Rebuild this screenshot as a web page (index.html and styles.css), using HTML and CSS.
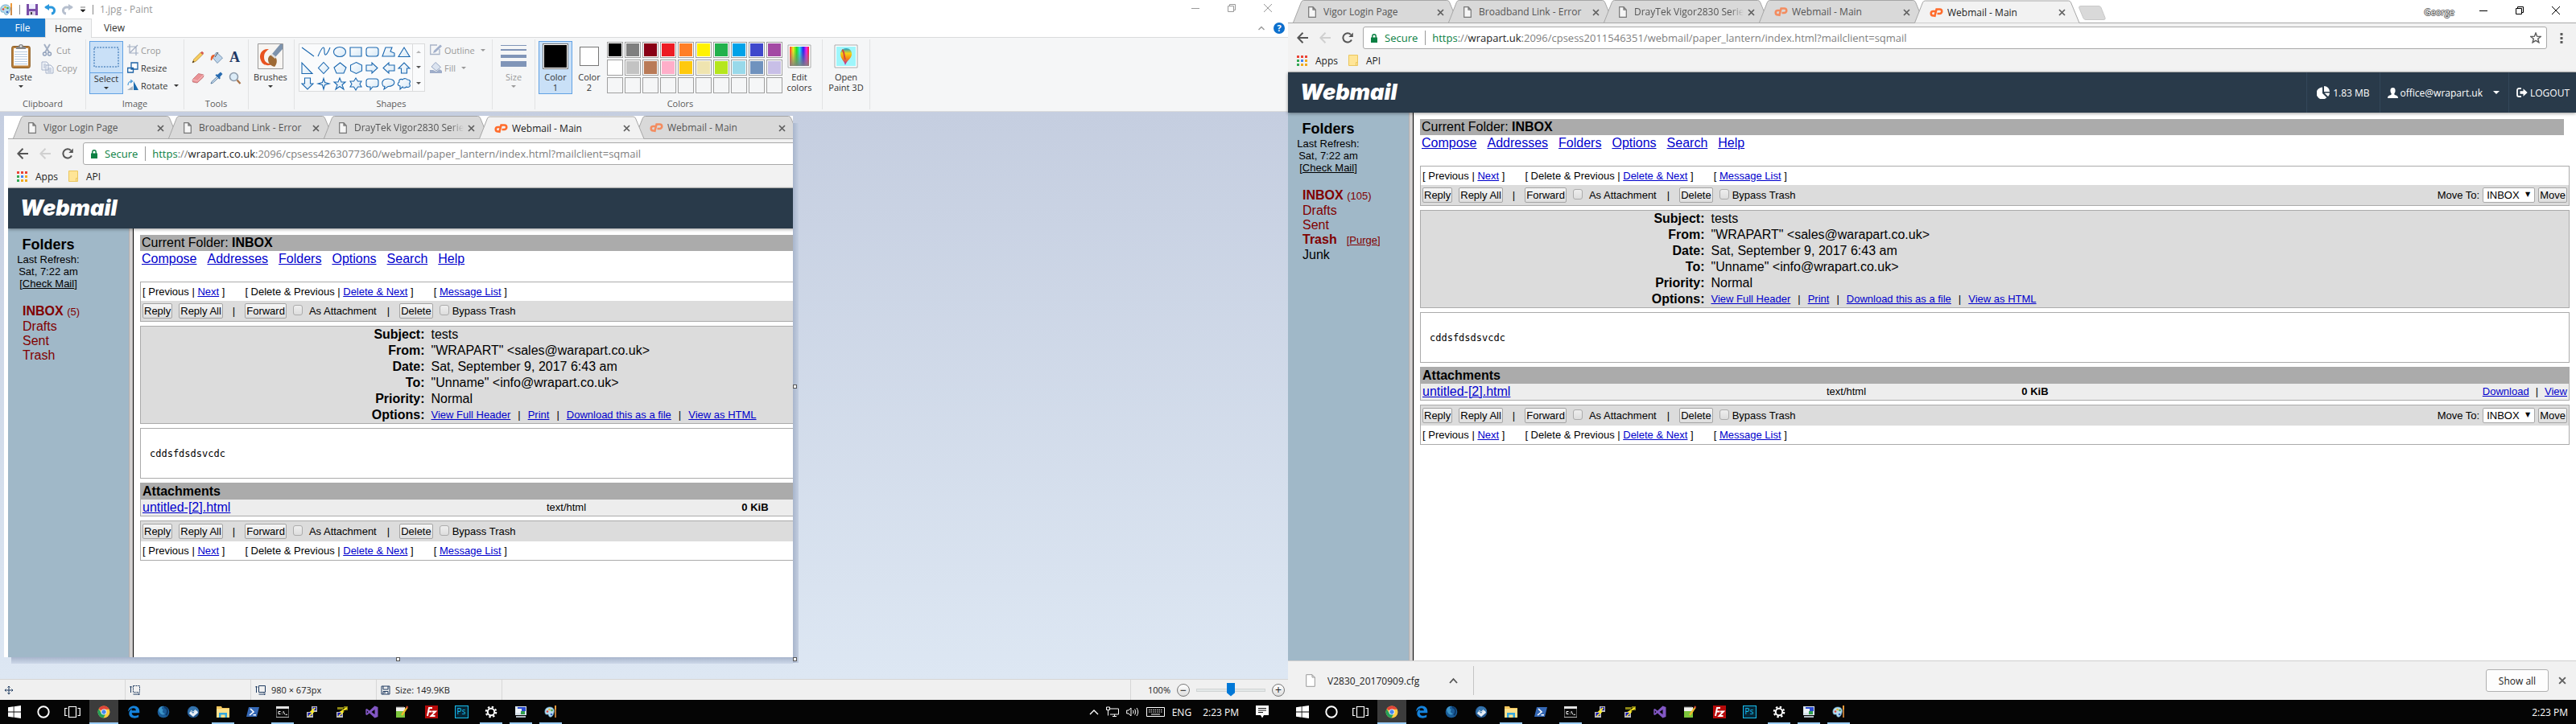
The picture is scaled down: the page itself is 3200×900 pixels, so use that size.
FILE: index.html
```html
<!DOCTYPE html>
<html lang="en">
<head>
<meta charset="utf-8">
<title>Desktop</title>
<link rel="stylesheet" href="styles.css">
</head>
<body>
<svg class="sprite" aria-hidden="true">
  <defs>
    <linearGradient id="g-shape" x1="0" y1="0" x2="1" y2="1"><stop offset="0" stop-color="#fff"/><stop offset="1" stop-color="#d6e8f6"/></linearGradient>
    <linearGradient id="g-rainbow" x1="0" x2="1" y1="0" y2="0"><stop offset="0" stop-color="#f33"/><stop offset=".18" stop-color="#ee2"/><stop offset=".36" stop-color="#2d2"/><stop offset=".52" stop-color="#2de"/><stop offset=".7" stop-color="#22e"/><stop offset=".86" stop-color="#e2e"/><stop offset="1" stop-color="#f22"/></linearGradient>
    <linearGradient id="g-shade" x1="0" x2="0" y1="0" y2="1"><stop offset=".2" stop-color="#808080" stop-opacity="0"/><stop offset="1" stop-color="#808080" stop-opacity=".9"/></linearGradient>
    <linearGradient id="g-balloon" x1="0" x2="0" y1="0" y2="1"><stop offset="0" stop-color="#1b9fd0"/><stop offset=".3" stop-color="#f5d312"/><stop offset=".6" stop-color="#f58a12"/><stop offset="1" stop-color="#b012c0"/></linearGradient>
    <symbol id="tab" viewBox="0 0 206 28"><path d="M.5 28 10.500 2.500Q11.500.5 13.500.5H191.500Q193.500.5 194.500 2.500L205 28" stroke="#a6a6a6"/></symbol>
    <symbol id="page" viewBox="0 0 10 14"><path d="M.7.7H6L9.300 4.200V13.300H.7ZM6 .7V4.200H9.300" fill="#f6f6f6" stroke="#767676" stroke-width="1.200"/></symbol>
    <symbol id="cp" viewBox="0 0 17 12"><path d="M7 4H4.500A2.600 2.600 0 0 0 4.500 9.500H6.500L8.600 1.500H12.500A2.600 2.600 0 0 1 12.500 7H9.500M6.500 9.500 6.200 11" fill="none" stroke="#ff6c2c" stroke-width="2.600"/></symbol>
    <symbol id="x" viewBox="0 0 9 9"><path d="M1 1 8 8M8 1 1 8" stroke="#5f5f5f" stroke-width="1.700"/></symbol>
    <symbol id="back" viewBox="0 0 14 14"><path d="M14 7H1.500M7.500 .8 1.300 7 7.500 13.200" fill="none" stroke="currentColor" stroke-width="2"/></symbol>
    <symbol id="reload" viewBox="0 0 14 14"><path d="M12 9.500A5.600 5.600 0 1 1 11 3" fill="none" stroke="#555" stroke-width="2"/><path d="M13.800.5V6H8.300Z" fill="#555"/></symbol>
    <symbol id="lock" viewBox="0 0 8 11"><path d="M0 4.500H8V11H0Z" fill="#0b8043"/><path d="M1.800 5V3A2.200 2.200 0 0 1 6.200 3V5" fill="none" stroke="#0b8043" stroke-width="1.400"/></symbol>
    <symbol id="star" viewBox="0 0 14 14"><path d="M7 1 8.600 5.200 13.200 5.500 9.700 8.300 10.900 12.800 7 10.300 3.100 12.800 4.300 8.300.8 5.500 5.400 5.200Z" fill="none" stroke="#5a5a5a" stroke-width="1.400"/></symbol>
    <symbol id="dots" viewBox="0 0 4 14"><path d="M.5 1H3.500V4H.5ZM.5 6H3.500V9H.5ZM.5 11H3.500V14H.5Z" fill="#5a5a5a"/></symbol>
    <symbol id="apps" viewBox="0 0 13 13"><path d="M0 0H3V3H0ZM5 0H8V3H5ZM10 0H13V3H10Z" fill="#ea4335"/><path d="M0 5H3V8H0ZM0 10H3V13H0Z" fill="#34a853"/><path d="M5 5H8V8H5Z" fill="#4285f4"/><path d="M10 5H13V8H10ZM5 10H8V13H5ZM10 10H13V13H10Z" fill="#f0a91c"/></symbol>
    <symbol id="folder" viewBox="0 0 12 14"><path d="M.5.5H11.500V13.500H.5Z" fill="#ffe597" stroke="#eac65f"/><path d="M9.500 13.500V9.500H11.500" fill="none" stroke="#eac65f"/></symbol>
    <symbol id="min" viewBox="0 0 10 10"><path d="M0 5.500H10" stroke="currentColor"/></symbol>
    <symbol id="restore" viewBox="0 0 10 10"><path d="M.5 2.500H7.500V9.500H.5ZM2.500 2.500V.5H9.500V7.500H7.500" fill="none" stroke="currentColor"/></symbol>
    <symbol id="close" viewBox="0 0 10 10"><path d="M0 0 10 10M10 0 0 10" stroke="currentColor"/></symbol>
    <symbol id="pie" viewBox="0 0 16 16"><path d="M7 1.500V9L12.300 14.300A7.500 7.500 0 1 1 7 1.500Z"/><path d="M9 0A7 7 0 0 1 16 7H9Z"/><path d="M9.500 8.500H16A7 7 0 0 1 14 13Z"/></symbol>
    <symbol id="user" viewBox="0 0 13 13"><path d="M6.500 0C9 0 9.900 2 9.500 4.500 9.300 6 8.700 6.500 8.300 7.200 8 8.800 9 9 10.500 9.600 12 10.200 13 11 13 13H0C0 11 1 10.200 2.500 9.600 4 9 5 8.800 4.700 7.200 4.300 6.500 3.700 6 3.500 4.500 3.100 2 4 0 6.500 0Z"/></symbol>
    <symbol id="logout" viewBox="0 0 14 12"><path d="M6 1H3A2 2 0 0 0 1 3V9A2 2 0 0 0 3 11H6" fill="none" stroke="#fff" stroke-width="1.800"/><path d="M4.500 4.200H8.500V1.300L13.700 6 8.500 10.700V7.800H4.500Z"/></symbol>
    <symbol id="t-win" viewBox="0 0 16 16"><path d="M0 2.300 6.700 1.300V7.500H0ZM7.500 1.200 16 0V7.500H7.500ZM0 8.400H6.700V14.700L0 13.700ZM7.500 8.400H16V16L7.500 14.800Z" fill="#fff"/></symbol>
    <symbol id="t-cortana" viewBox="0 0 16 16"><circle cx="8" cy="8" r="6.700" fill="none" stroke="#fff" stroke-width="1.900"/></symbol>
    <symbol id="t-view" viewBox="0 0 20 16"><path d="M5.500 1.500H14.500V14.500H5.500ZM3.500 3.500H.7V12.500H3.500M16.500 3.500H19.300V12.500H16.500" fill="none" stroke="#fff" stroke-width="1.200"/></symbol>
    <symbol id="t-chrome" viewBox="0 0 16 16"><circle cx="8" cy="8" r="7.500" fill="#ffcd40"/><path d="M8 8 1.500 4.200A7.500 7.500 0 0 1 14.800 4.800H8Z" fill="#e0453a"/><path d="M1.500 4.200A7.500 7.500 0 0 0 7.500 15.500L10.800 9.600 5 9.500Z" fill="#25a05a"/><circle cx="8" cy="8" r="3.500" fill="#fff"/><circle cx="8" cy="8" r="2.700" fill="#4687f0"/></symbol>
    <symbol id="t-edge" viewBox="0 0 16 16"><path d="M1 7.500C1.500 3 4.500.5 8.500.5 12.800.5 15.300 3.500 15.300 7.500V9.200H5.700C5.900 13.400 11 13.600 14.200 11.500V14.600C9.500 17 2.300 15.700 2.300 9.800 2.300 7 4 5 6.300 4.200 5.700 4.900 5.600 5.600 5.600 6.300H10.900C10.900 1.800 4.500 2.500 1 7.500Z" fill="#1583dc"/></symbol>
    <symbol id="t-fox" viewBox="0 0 16 16"><circle cx="8" cy="8" r="7.300" fill="#1a5c98"/><path d="M2 5C3 2 5 1 8 .8 5 3 5.500 4.500 8 5 6 7 7 10 10 10 8 13 3 11 2 5Z" fill="#3d94c8"/><path d="M9 2C14 3 14 9 11 12" stroke="#0c3868" stroke-width="2" fill="none"/></symbol>
    <symbol id="t-bird" viewBox="0 0 16 16"><circle cx="8" cy="8" r="7.300" fill="#22568d"/><path d="M3 5 12 4 14 9 8 14 3 10Z" fill="#e6edf5"/><path d="M6 1C11 1 14 3 15 7L10 6 8 10 5 7 2 11C1 6 3 3 6 1Z" fill="#3473ac"/><path d="M5 6 8 8 11 5" fill="none" stroke="#ccd8e4"/></symbol>
    <symbol id="t-files" viewBox="0 0 16 16"><path d="M0 1H6L7 3H16V15H0Z" fill="#f2c55a"/><path d="M0 4H16V15H0Z" fill="#ffe18b"/><path d="M3 15V9H13V15H10.500V11.500H5.500V15Z" fill="#33a7df"/></symbol>
    <symbol id="t-ps" viewBox="0 0 16 16"><path d="M3 2H16L13 14H0Z" fill="#3568b5"/><path d="M5 4 9 8 4 12M8.500 11.800H12" fill="none" stroke="#fff" stroke-width="1.600"/></symbol>
    <symbol id="t-cmd" viewBox="0 0 16 16"><path d="M0 1.500H16V14.500H0Z" fill="#090909" stroke="#b7b7b7"/><path d="M0 1H16V4H0Z" fill="#e2e2e2"/><path d="M5.500 7.500H3V10.500H5.500M7.500 8V8.600M7.500 10V10.600M9 7 10.500 11M11.500 11.300H14" fill="none" stroke="#fff"/></symbol>
    <symbol id="t-putty" viewBox="0 0 16 16"><path d="M7 1H14V8H7ZM1 8H9V15H1Z" fill="#bdbdbd"/><path d="M8.500 2H13V6H8.500ZM2.500 9H7.500V13H2.500Z" fill="#1414b8"/><path d="M11.500 3 6.500 7.500 9.200 8 4 13" fill="none" stroke="#ffee23" stroke-width="1.700"/></symbol>
    <symbol id="t-putty2" viewBox="0 0 16 16"><path d="M1 8H9V15H1Z" fill="#bdbdbd"/><path d="M2.500 9H7.500V13H2.500Z" fill="#1414b8"/><path d="M2 2H10L9 5H2ZM10 1H15V6H11Z" fill="#8b8514"/><path d="M14 3 6.500 7.500 9.200 8 4 13" fill="none" stroke="#ffee23" stroke-width="1.500"/></symbol>
    <symbol id="t-vs" viewBox="0 0 16 16"><path d="M11.500.5 15.500 2V14L11.500 15.500 5 9.500 1.800 12 .3 11.300V4.700L1.800 4 5 6.500ZM11.500 5 7.500 8 11.500 11ZM1.800 6.300V9.700L3.500 8Z" fill="#8257c4" fill-rule="evenodd"/></symbol>
    <symbol id="t-note" viewBox="0 0 16 16"><path d="M1 2H12V15H1Z" fill="#f2f2ee"/><path d="M1 7H12V15H1Z" fill="#7bc53c"/><path d="M2 1V3M4 1V3M6 1V3M8 1V3M10 1V3" stroke="#777"/><path d="M15 2 8 12" stroke="#f0b92c" stroke-width="2.200"/><path d="M15.500 1 14 3" stroke="#bf3c2c" stroke-width="2.200"/></symbol>
    <symbol id="t-fz" viewBox="0 0 16 16"><path d="M0 0H16V16H0Z" fill="#b70a0a"/><path d="M9 3H5L3 13M3.500 7.500H8M8.500 7.500H13L7.500 13H12.500" fill="none" stroke="#fff" stroke-width="1.900"/></symbol>
    <symbol id="t-gear" viewBox="0 0 16 16"><circle cx="8" cy="8" r="4.200" fill="none" stroke="#fff" stroke-width="2"/><circle cx="8" cy="8" r="6.200" fill="none" stroke="#fff" stroke-width="2.200" stroke-dasharray="2.400 2.470"/></symbol>
    <symbol id="t-rdp" viewBox="0 0 16 16"><path d="M1 1H15V12H1Z" fill="#d8e3ec"/><path d="M4 2H14V7H4Z" fill="#2a4bd0"/><path d="M2 4H9V9H2Z" fill="#eef3f8"/><path d="M8 7H13V11H8Z" fill="#32a04f"/><path d="M2 13H14V15H2Z" fill="#aeb9c2"/></symbol>
    <symbol id="t-paint" viewBox="0 0 16 16"><path d="M1 9C0 4 4 1.500 8 2 12 2.500 13 6 12 9 11 14 8 15 6.500 14 5 12.500 6 11 4 11 2 11.500 1.200 10.500 1 9Z" fill="#b6dcf0" stroke="#4e8fb5" stroke-width=".7"/><circle cx="4" cy="7.500" r="1.300" fill="#d9453c"/><circle cx="6.500" cy="5" r="1.300" fill="#eeb72d"/><circle cx="9.500" cy="6" r="1.300" fill="#4aa64d"/><circle cx="9" cy="11" r="1.300" fill="#3a62c0"/><path d="M14 1V15" stroke="#c98038" stroke-width="1.800"/><path d="M13 0H15V5H13Z" fill="#ee9a3a"/></symbol>
  </defs>
</svg>

<div class="desktop">
  <section class="screen">
    <div class="paint">
      <header class="titlebar">
        <div class="quick">
          <svg width="16" height="16"><use href="#t-paint"/></svg>
          <i class="vbar"></i>
          <svg width="14" height="14" viewBox="0 0 14 14"><path d="M0 0H14V14H0Z" fill="#7b4fa8"/><path d="M3 0H11V6H3Z" fill="#eef"/><path d="M3 9H11V14H3Z" fill="#d9cfe8"/><path d="M5 10H7V13H5Z" fill="#444"/></svg>
          <svg width="14" height="14" viewBox="0 0 14 14"><path d="M1.500 4H8A4 4 0 0 1 9 12" fill="none" stroke="#2b98dd" stroke-width="3"/><path d="M6 0V8L0 4Z" fill="#2b98dd"/></svg>
          <svg width="14" height="14" viewBox="0 0 14 14"><path d="M12.500 4H6A4 4 0 0 0 5 12" fill="none" stroke="#b6bfce" stroke-width="3"/><path d="M8 0V8L14 4Z" fill="#b6bfce"/></svg>
          <svg width="8" height="8" viewBox="0 0 8 8"><path d="M1 1H7M1 4H7L4 7Z" fill="#222" stroke="#222" stroke-width=".6"/></svg>
          <i class="vbar"></i>
          <span class="doc">1.jpg - Paint</span>
        </div>
        <div class="wincontrols dim">
          <button aria-label="Minimize"><svg width="10" height="10"><use href="#min"/></svg></button>
          <button aria-label="Restore"><svg width="10" height="10"><use href="#restore"/></svg></button>
          <button aria-label="Close"><svg width="10" height="10"><use href="#close"/></svg></button>
        </div>
      </header>
      <nav class="ribbontabs">
        <button class="file">File</button><button class="home">Home</button><button class="view">View</button>
        <span class="ribbonhelp">
          <svg width="8" height="6" viewBox="0 0 8 6"><path d="M.5 5 4 1.500 7.500 5" fill="none" stroke="#999" stroke-width="1.400"/></svg>
          <button class="help" aria-label="Help">?</button>
        </span>
      </nav>
      <div class="ribbon">
        <div class="group g-clip">
          <div class="items">
            <button class="big"><span class="pic"><svg width="24" height="30" viewBox="0 0 24 30"><rect x=".7" y="2.500" width="22.600" height="27" rx="2" fill="#b9803c" stroke="#8a5a20"/><path d="M3 5H21V26.500H3Z" fill="#fff"/><path d="M4 9.500H20M4 12.500H20M4 15.500H20M4 18.500H20M4 21.500H20M4 24.500H20" stroke="#b7cbe0"/><path d="M6 6V3H9A3 3 0 0 1 15 3H18V6Z" fill="#868686"/><circle cx="12" cy="2.500" r="1.200" fill="#eee"/></svg></span>Paste<i class="caret"></i></button>
            <div class="stack dimtext">
              <button><svg width="16" height="16" viewBox="0 0 16 16"><path d="M4 1 10 11M11 1 5 11" stroke="#a4b0c4" stroke-width="2"/><circle cx="4.500" cy="13" r="2" fill="none" stroke="#8f9fba" stroke-width="1.400"/><circle cx="10.500" cy="13" r="2" fill="none" stroke="#8f9fba" stroke-width="1.400"/></svg>Cut</button>
              <button><svg width="16" height="16" viewBox="0 0 16 16"><path d="M1 1H7L9 3V11H1ZM6 5H12L15 8V15H6Z" fill="#f2f5fa" stroke="#a5b1c8"/><path d="M3 4H6M3 6H5M3 8H5M8 9H13M8 11H13M8 13H13" stroke="#a5b1c8"/></svg>Copy</button>
            </div>
          </div>
          <span class="label">Clipboard</span>
        </div>
        <div class="group g-image">
          <div class="items">
            <button class="big select"><span class="pic"><svg width="32" height="26" viewBox="0 0 32 26"><path d="M1 1H31V25H1Z" fill="none" stroke="#2063a8" stroke-dasharray="2 1.500"/></svg></span><span class="lower">Select<i class="caret"></i></span></button>
            <div class="stack">
              <button class="dimtext"><svg width="14" height="14" viewBox="0 0 14 14"><path d="M3 0V11H14M0 3H11V14M4 10 13 1" fill="none" stroke="#a2adc2" stroke-width="1.200"/></svg>Crop</button>
              <button><svg width="14" height="14" viewBox="0 0 14 14"><path d="M5 1H13V9H5ZM.7 7.500H7.500V13H.7Z" fill="#fff" stroke="#1c62a5" stroke-width="1.300"/></svg>Resize</button>
              <button><svg width="14" height="14" viewBox="0 0 14 14"><path d="M8 13V2L14 13Z" fill="#1d6cae"/><path d="M0 13H7V8Z" fill="#aab3bc"/><path d="M1 7C1 3 3 2 6 2M4 0 6.500 2 4 4" fill="none" stroke="#4a9ad8" stroke-width="1.200"/></svg>Rotate<i class="caret"></i></button>
            </div>
          </div>
          <span class="label">Image</span>
        </div>
        <div class="group g-tools">
          <div class="items toolgrid">
            <button aria-label="Pencil"><svg width="16" height="16" viewBox="0 0 16 16"><path d="M1 15 3 10.500 11.500 2 14 4.500 5.500 13Z" fill="#f7cf5e" stroke="#b9862c" stroke-width=".8"/><path d="M11 2.500 13 .7 15.300 3 13.500 5Z" fill="#d45a52"/><path d="M1 15 2 12.500 3.500 14Z" fill="#222"/></svg></button>
            <button aria-label="Fill with color"><svg width="16" height="16" viewBox="0 0 16 16"><path d="M8 2 15.500 9 9 15.500 3 8.500Z" fill="#bfd5ea" stroke="#6d8cab" stroke-width=".9"/><path d="M6 8 10 2" stroke="#555"/><path d="M6 5C2 4.500.5 7 .8 12 2.500 13 3 9 4.500 8Z" fill="#e8602c"/></svg></button>
            <button class="glyph" aria-label="Text">A</button>
            <button aria-label="Eraser"><svg width="16" height="16" viewBox="0 0 16 16"><path d="M1 10 8.500 2.500 15 4 14.500 7 7 14 1.500 13Z" fill="#ea9295" stroke="#b96468" stroke-width=".7"/><path d="M1 10 7.500 11.500 15 4" fill="none" stroke="#f7c3c4"/></svg></button>
            <button aria-label="Color picker"><svg width="16" height="16" viewBox="0 0 16 16"><path d="M9 4 13 .5 15.500 3 12 7 13 8 11.500 9.500 6.500 4.500 8 3Z" fill="#286bb0"/><path d="M8.500 6.500 2 12.500 1 15 3.500 14 10 8" fill="#c8dced" stroke="#54779c" stroke-width=".9"/></svg></button>
            <button aria-label="Magnifier"><svg width="16" height="16" viewBox="0 0 16 16"><circle cx="6.500" cy="6.500" r="5" fill="#dcecf8" stroke="#8d9bab" stroke-width="1.600"/><path d="M10.500 10.500 14.500 15" stroke="#a9744a" stroke-width="2.300"/></svg></button>
          </div>
          <span class="label">Tools</span>
        </div>
        <div class="group g-brush">
          <div class="items">
            <button class="big"><span class="pic"><svg width="32" height="32" viewBox="0 0 32 32"><path d="M.5.5H31.500V31.500H.5Z" fill="#f7f5f2" stroke="#999"/><path d="M14 7C5 6 1 14 4 21 7 29 15 28 20 25 12 26 8 23 8 17 8 12 10 10 14 7Z" fill="#e85320"/><path d="M31 1V7L22 17 18 13 28 1Z" fill="#7d93ad"/><path d="M22 17C25 20 24 26 21 29 17 28 13 25 13 20 13 16 16 14 19 14Z" fill="#9e6a35"/><path d="M17 13.500 22.500 18" stroke="#ddd" stroke-width="2.500"/></svg></span>Brushes<i class="caret"></i></button>
          </div>
          <span class="label"></span>
        </div>
        <div class="group g-shapes">
          <div class="items">
            <div class="gallery">
              <svg width="140" height="58" viewBox="0 0 140 58" fill="url(#g-shape)" stroke="#1b68b0" stroke-width="1.100">
                <path d="M3 4 18 15"/><path d="M23 15C29 1 31 2 31 9 31 16 34 14 38 4" fill="none"/><ellipse cx="50" cy="9.500" rx="7.500" ry="6"/><path d="M63 4H77V15H63Z"/><rect x="83" y="4" width="15" height="11" rx="3"/><path d="M103 15 107 4H115L113 9 118 11V15Z"/><path d="M130 4 137 15.500H123Z"/>
                <path d="M3 23V36.500H16Z"/><path d="M30 22.500 36.500 29.500 30 36.500 23.500 29.500Z"/><path d="M50.500 23 58 29 55 36H46L43 29Z"/><path d="M70.500 22.500 77.500 26V33L70.500 36.500 63.500 33V26Z"/><path d="M83 26H90V23L97 29.500 90 36V33H83Z"/><path d="M118 26H111V23L104 29.500 111 36V33H118Z"/><path d="M126.500 36V30H123L130 23 137 30H133.500V36Z"/>
                <path d="M6.500 42V49H3L10 56 17 49H13.500V42Z"/><path d="M30 42.500 31.500 47.500 37 49 31.500 50.500 30 56 28.500 50.500 23 49 28.500 47.500Z"/><path d="M50 42 52 47H57L53 50.500 55 56 50 52.500 45 56 47 50.500 43 47H48Z"/><path d="M70 42 72.500 46H77L75 49.500 77 53H72.500L70 57 67.500 53H63L65 49.500 63 46H67.500Z"/><path d="M86 43H95Q98 43 98 46V50Q98 53 95 53H91L88 56.500V53H86Q83 53 83 50V46Q83 43 86 43Z"/><path d="M104 52C101 47 104 43 110 43 121 43 120 52.500 110 52.500L105 56 106 52.500Z"/><path d="M125 52C121 51 122 48 124 47 123 43 127 43 128 44 130 41.500 134 43 134 44 138 44 138 47 136.500 49 139 53 135 54 133 53 131 55 128 54.500 128 53L125 56Z"/>
              </svg>
              <div class="gallerybar"><i class="caret up"></i><i class="caret"></i><i class="caret more"></i></div>
            </div>
            <div class="stack dimtext">
              <button><svg width="15" height="14" viewBox="0 0 15 14"><path d="M12 6V12.500H.7V1H9" fill="none" stroke="#a9b4c8" stroke-width="1.300"/><path d="M4 11 5 8 13 .5 15 2.500 7 10Z" fill="#a3b1cc"/></svg>Outline<i class="caret"></i></button>
              <button><svg width="15" height="14" viewBox="0 0 15 14"><path d="M7 .5 13.500 6.500 8 11 2 6Z" fill="#dce4f0" stroke="#98a7c3"/><path d="M0 10H4L8 12 12 9 15 11V14H0Z" fill="#9eadc9"/></svg>Fill<i class="caret"></i></button>
            </div>
          </div>
          <span class="label">Shapes</span>
        </div>
        <div class="group g-size">
          <div class="items">
            <button class="big dimtext"><span class="pic"><svg width="32" height="30" viewBox="0 0 32 30" fill="#8095b8"><path d="M0 1H32V2H0ZM0 6H32V8H0ZM0 13H32V17H0ZM0 21H32V28H0Z"/></svg></span>Size<i class="caret"></i></button>
          </div>
          <span class="label"></span>
        </div>
        <div class="group g-colors">
          <div class="items">
            <button class="big color on"><span class="pic"><i class="well black"></i></span>Color<br>1</button>
            <button class="big color"><span class="pic"><i class="well white"></i></span>Color<br>2</button>
            <div class="palette">
              <i class="c-black"></i><i class="c-gray"></i><i class="c-maroon"></i><i class="c-red"></i><i class="c-orange"></i><i class="c-yellow"></i><i class="c-green"></i><i class="c-azure"></i><i class="c-indigo"></i><i class="c-purple"></i>
              <i class="c-white"></i><i class="c-silver"></i><i class="c-brown"></i><i class="c-rose"></i><i class="c-gold"></i><i class="c-cream"></i><i class="c-lime"></i><i class="c-sky"></i><i class="c-steel"></i><i class="c-lavender"></i>
              <i></i><i></i><i></i><i></i><i></i><i></i><i></i><i></i><i></i><i></i>
            </div>
            <button class="big"><span class="pic"><svg width="30" height="30" viewBox="0 0 30 30"><path d="M1 1H29V29H1Z" fill="#fff" stroke="#aaa"/><path d="M3 3H27V27H3Z" fill="url(#g-rainbow)"/><path d="M3 3H27V27H3Z" fill="url(#g-shade)"/></svg></span>Edit<br>colors</button>
          </div>
          <span class="label">Colors</span>
        </div>
        <div class="group g-3d">
          <div class="items">
            <button class="big"><span class="pic"><svg width="30" height="30" viewBox="0 0 30 30"><path d="M1 1H29V29H1Z" fill="#fff" stroke="#aaa"/><path d="M3 3H27V27H3Z" fill="#9ff6fb"/><path d="M15 5C19.500 5 22.500 8 22 13 21.500 18 16 20 14 26 13 21 8 18 8 12 8 8 11 5 15 5Z" fill="url(#g-balloon)"/><path d="M10 7C13 8 12 14 14 19" stroke="#d8483a" fill="none" stroke-width="2"/></svg></span>Open<br>Paint 3D</button>
          </div>
          <span class="label"></span>
        </div>
      </div>

      <div class="workspace">
        <div class="picture">
          <div class="clip">
            <div class="browser">
              <div class="tabstrip">
                <div class="tab"><svg class="tabshape"><use href="#tab"/></svg><svg width="10" height="14"><use href="#page"/></svg><span>Vigor Login Page</span><button aria-label="Close tab"><svg width="9" height="9"><use href="#x"/></svg></button></div>
                <div class="tab"><svg class="tabshape"><use href="#tab"/></svg><svg width="10" height="14"><use href="#page"/></svg><span>Broadband Link - Error</span><button aria-label="Close tab"><svg width="9" height="9"><use href="#x"/></svg></button></div>
                <div class="tab"><svg class="tabshape"><use href="#tab"/></svg><svg width="10" height="14"><use href="#page"/></svg><span class="fade">DrayTek Vigor2830 Series</span><button aria-label="Close tab"><svg width="9" height="9"><use href="#x"/></svg></button></div>
                <div class="tab active"><svg class="tabshape"><use href="#tab"/></svg><svg width="17" height="12"><use href="#cp"/></svg><span>Webmail - Main</span><button aria-label="Close tab"><svg width="9" height="9"><use href="#x"/></svg></button></div>
                <div class="tab"><svg class="tabshape"><use href="#tab"/></svg><svg class="pale" width="17" height="12"><use href="#cp"/></svg><span>Webmail - Main</span><button aria-label="Close tab"><svg width="9" height="9"><use href="#x"/></svg></button></div>
              </div>
              <div class="toolbar">
                <button aria-label="Back"><svg width="14" height="14"><use href="#back"/></svg></button>
                <button class="forward" aria-label="Forward"><svg width="14" height="14"><use href="#back"/></svg></button>
                <button aria-label="Reload"><svg width="14" height="14"><use href="#reload"/></svg></button>
                <div class="omnibox"><svg width="8" height="11"><use href="#lock"/></svg><span class="secure">Secure</span><span class="url"><b>https</b>://<em>wrapart.co.uk</em>:2096/cpsess4263077360/webmail/paper_lantern/index.html?mailclient=sqmail</span></div>
              </div>
              <div class="bookmarks"><a href="#"><svg width="13" height="13"><use href="#apps"/></svg>Apps</a><a href="#"><svg width="12" height="14"><use href="#folder"/></svg>API</a></div>
              <div class="mailhead"><span class="logo">Webmail</span></div>
              <div class="frames">
                <aside class="side">
                  <div class="sidehead"><h2>Folders</h2><p>Last Refresh:<br>Sat, 7:22 am<br>[<a href="#">Check Mail</a>]</p></div>
                  <ul><li><a href="#"><b>INBOX</b></a> <small>(5)</small></li><li><a href="#">Drafts</a></li><li><a href="#">Sent</a></li><li><a href="#">Trash</a></li></ul>
                </aside>
                <main class="mail">
                  <div class="current">Current Folder: <b>INBOX</b></div>
                  <nav class="menu"><a href="#">Compose</a><a href="#">Addresses</a><a href="#">Folders</a><a href="#">Options</a><a href="#">Search</a><a href="#">Help</a></nav>
                  <section class="box">
                    <div class="pager"><span>[ Previous | <a href="#">Next</a> ]</span><span>[ Delete &amp; Previous | <a href="#">Delete &amp; Next</a> ]</span><span>[ <a href="#">Message List</a> ]</span></div>
                    <div class="actions"><button>Reply</button><button>Reply All</button><i>|</i><button>Forward</button><label><input type="checkbox"><span>As Attachment</span></label><i>|</i><button>Delete</button><label class="tight"><input type="checkbox"><span>Bypass Trash</span></label></div>
                  </section>
                  <table class="box headers">
                    <tr><th>Subject:</th><td>tests</td></tr>
                    <tr><th>From:</th><td>"WRAPART" &lt;sales@warapart.co.uk&gt;</td></tr>
                    <tr><th>Date:</th><td>Sat, September 9, 2017 6:43 am</td></tr>
                    <tr><th>To:</th><td>"Unname" &lt;info@wrapart.co.uk&gt;</td></tr>
                    <tr><th>Priority:</th><td>Normal</td></tr>
                    <tr><th>Options:</th><td><div class="opts"><a href="#">View Full Header</a><i>|</i><a href="#">Print</a><i>|</i><a href="#">Download this as a file</a><i>|</i><a href="#">View as HTML</a></div></td></tr>
                  </table>
                  <section class="box body"><pre>cddsfdsdsvcdc</pre></section>
                  <section class="box attach">
                    <h3>Attachments</h3>
                    <table><tr><td class="name"><a href="#">untitled-[2].html</a></td><td class="type">text/html</td><td><b>0 KiB</b></td><td class="get"></td></tr></table>
                  </section>
                  <section class="box">
                    <div class="actions"><button>Reply</button><button>Reply All</button><i>|</i><button>Forward</button><label><input type="checkbox"><span>As Attachment</span></label><i>|</i><button>Delete</button><label class="tight"><input type="checkbox"><span>Bypass Trash</span></label></div>
                    <div class="pager"><span>[ Previous | <a href="#">Next</a> ]</span><span>[ Delete &amp; Previous | <a href="#">Delete &amp; Next</a> ]</span><span>[ <a href="#">Message List</a> ]</span></div>
                  </section>
                </main>
              </div>
            </div>
          </div>
          <i class="handle right"></i><i class="handle bottom"></i><i class="handle corner"></i>
        </div>
      </div>

      <footer class="status">
        <div class="cell"><svg width="12" height="12" viewBox="0 0 12 12"><path d="M6 1V11M1 6H11M4.500 2.500 6 1 7.500 2.500M4.500 9.500 6 11 7.500 9.500M2.500 4.500 1 6 2.500 7.500M9.500 4.500 11 6 9.500 7.500" fill="none" stroke="#1f3b60"/></svg></div>
        <div class="cell"><svg width="14" height="12" viewBox="0 0 14 12"><path d="M4.500.5H12.500V8.500H4.500Z" fill="none" stroke="#1f3b60" stroke-dasharray="2 1"/><path d="M1.500 9V1M0 2.500 1.500 1 3 2.500M4.500 11H12M11 9.500 12.500 11 11 12" fill="none" stroke="#1f3b60"/></svg></div>
        <div class="cell"><svg width="14" height="12" viewBox="0 0 14 12"><path d="M4.500.5H12.500V8.500H4.500Z" fill="none" stroke="#1f3b60"/><path d="M1.500 9V1M0 2.500 1.500 1 3 2.500M4.500 11H12M11 9.500 12.500 11 11 12" fill="none" stroke="#1f3b60"/></svg>980 × 673px</div>
        <div class="cell"><svg width="12" height="12" viewBox="0 0 12 12"><path d="M1 1H11V11H1ZM3 1V5H9V1M3 11V7.500H9V11M5 8V10" fill="none" stroke="#1f3b60"/></svg>Size: 149.9KB</div>
        <div class="zoom"><span>100%</span>
          <button class="round" aria-label="Zoom out">−</button>
          <input type="range" min="0" max="100" value="50" aria-label="Zoom">
          <button class="round" aria-label="Zoom in">+</button></div>
      </footer>
    </div>

    <div class="taskbar">
      <div class="sys"><button aria-label="Start"><svg width="16" height="16"><use href="#t-win"/></svg></button><button aria-label="Cortana"><svg width="16" height="16"><use href="#t-cortana"/></svg></button><button aria-label="Task view"><svg width="20" height="16"><use href="#t-view"/></svg></button></div>
      <div class="apps">
        <button class="front" aria-label="Chrome"><svg><use href="#t-chrome"/></svg></button><button aria-label="Edge"><svg><use href="#t-edge"/></svg></button><button aria-label="Firefox"><svg><use href="#t-fox"/></svg></button><button aria-label="Thunderbird"><svg><use href="#t-bird"/></svg></button><button class="open" aria-label="Explorer"><svg><use href="#t-files"/></svg></button><button aria-label="PowerShell"><svg><use href="#t-ps"/></svg></button><button class="open" aria-label="Command Prompt"><svg><use href="#t-cmd"/></svg></button><button aria-label="PuTTY"><svg><use href="#t-putty"/></svg></button><button aria-label="PuTTYgen"><svg><use href="#t-putty2"/></svg></button><button aria-label="Visual Studio"><svg><use href="#t-vs"/></svg></button><button aria-label="Notepad++"><svg><use href="#t-note"/></svg></button><button aria-label="FileZilla"><svg><use href="#t-fz"/></svg></button><button class="psd"><span>Ps</span></button><button class="open" aria-label="Settings"><svg><use href="#t-gear"/></svg></button><button class="open" aria-label="Remote Desktop"><svg><use href="#t-rdp"/></svg></button><button class="open" aria-label="Paint"><svg><use href="#t-paint"/></svg></button>
      </div>
      <div class="tray">
        <svg width="12" height="8" viewBox="0 0 12 8"><path d="M1 7 6 2 11 7" fill="none" stroke="#fff" stroke-width="1.400"/></svg>
        <svg width="16" height="14" viewBox="0 0 16 14"><path d="M5 3H15.500V10H5M8 12.500H13M10.500 10V12.500M.5 1H4.500V4.500H.5ZM2.500 5V11.500" fill="none" stroke="#fff"/></svg>
        <svg width="16" height="14" viewBox="0 0 16 14"><path d="M.7 5H3L6 2V12L3 9H.7ZM8.500 5Q10 7 8.500 9M10.700 3.500Q13 7 10.700 10.500M13 2Q16.500 7 13 12" fill="none" stroke="#fff"/></svg>
        <svg width="23" height="14" viewBox="0 0 23 14"><path d="M.5 1.500H22.500V12.500H.5Z" fill="none" stroke="#fff"/><path d="M3 4.500H20M3 7H20" stroke="#fff" stroke-dasharray="1.500 1"/><path d="M6 10H17" stroke="#fff"/></svg>
        <span>ENG</span>
        <time>2:23 PM</time>
        <svg class="notice" width="16" height="16" viewBox="0 0 16 16"><path d="M0 0H16V12H10L8 15.500 6 12H0Z" fill="#fff"/><path d="M3 3.500H13M3 6H13M3 8.500H9" stroke="#111"/></svg>
      </div>
    </div>
  </section>

  <section class="screen">
    <div class="browser full">
      <div class="tabstrip">
        <div class="tab"><svg class="tabshape"><use href="#tab"/></svg><svg width="10" height="14"><use href="#page"/></svg><span>Vigor Login Page</span><button aria-label="Close tab"><svg width="9" height="9"><use href="#x"/></svg></button></div>
        <div class="tab"><svg class="tabshape"><use href="#tab"/></svg><svg width="10" height="14"><use href="#page"/></svg><span>Broadband Link - Error</span><button aria-label="Close tab"><svg width="9" height="9"><use href="#x"/></svg></button></div>
        <div class="tab"><svg class="tabshape"><use href="#tab"/></svg><svg width="10" height="14"><use href="#page"/></svg><span class="fade">DrayTek Vigor2830 Series</span><button aria-label="Close tab"><svg width="9" height="9"><use href="#x"/></svg></button></div>
        <div class="tab"><svg class="tabshape"><use href="#tab"/></svg><svg class="pale" width="17" height="12"><use href="#cp"/></svg><span>Webmail - Main</span><button aria-label="Close tab"><svg width="9" height="9"><use href="#x"/></svg></button></div>
        <div class="tab active"><svg class="tabshape"><use href="#tab"/></svg><svg width="17" height="12"><use href="#cp"/></svg><span>Webmail - Main</span><button aria-label="Close tab"><svg width="9" height="9"><use href="#x"/></svg></button></div>
        <button class="newtab" aria-label="New tab"><svg width="34" height="18" viewBox="0 0 34 18"><path d="M3 .5H25Q27 .5 28 2.500L33 15Q34 17.500 31 17.500H9Q7 17.500 6 15.500L.8 3Q0 .5 3 .5Z" fill="#d9d9d9" stroke="#c8c8c8"/></svg></button>
        <span class="profile">George</span>
        <div class="wincontrols">
          <button aria-label="Minimize"><svg width="10" height="10"><use href="#min"/></svg></button>
          <button aria-label="Restore"><svg width="10" height="10"><use href="#restore"/></svg></button>
          <button aria-label="Close"><svg width="10" height="10"><use href="#close"/></svg></button>
        </div>
      </div>
      <div class="toolbar">
        <button aria-label="Back"><svg width="14" height="14"><use href="#back"/></svg></button>
        <button class="forward" aria-label="Forward"><svg width="14" height="14"><use href="#back"/></svg></button>
        <button aria-label="Reload"><svg width="14" height="14"><use href="#reload"/></svg></button>
        <div class="omnibox"><svg width="8" height="11"><use href="#lock"/></svg><span class="secure">Secure</span><span class="url"><b>https</b>://<em>wrapart.uk</em>:2096/cpsess2011546351/webmail/paper_lantern/index.html?mailclient=sqmail</span><svg width="14" height="14"><use href="#star"/></svg></div>
        <button class="menudots" aria-label="Menu"><svg width="4" height="14"><use href="#dots"/></svg></button>
      </div>
      <div class="bookmarks"><a href="#"><svg width="13" height="13"><use href="#apps"/></svg>Apps</a><a href="#"><svg width="12" height="14"><use href="#folder"/></svg>API</a></div>
      <div class="mailhead"><span class="logo">Webmail</span>
        <div class="account">
          <span class="quota"><svg width="16" height="16"><use href="#pie"/></svg>1.83 MB</span>
          <button class="who"><svg width="13" height="13"><use href="#user"/></svg>office@wrapart.uk<i class="caret"></i></button>
          <a class="out" href="#"><svg width="14" height="12"><use href="#logout"/></svg>LOGOUT</a>
        </div>
      </div>
      <div class="frames">
        <aside class="side">
          <div class="sidehead"><h2>Folders</h2><p>Last Refresh:<br>Sat, 7:22 am<br>[<a href="#">Check Mail</a>]</p></div>
          <ul><li><a href="#"><b>INBOX</b></a> <small>(105)</small></li><li><a href="#">Drafts</a></li><li><a href="#">Sent</a></li><li class="trash"><a href="#"><b>Trash</b></a><small>[<a class="purge" href="#">Purge</a>]</small></li><li><a class="junk" href="#">Junk</a></li></ul>
        </aside>
        <main class="mail">
          <div class="current">Current Folder: <b>INBOX</b></div>
          <nav class="menu"><a href="#">Compose</a><a href="#">Addresses</a><a href="#">Folders</a><a href="#">Options</a><a href="#">Search</a><a href="#">Help</a></nav>
          <section class="box">
            <div class="pager"><span>[ Previous | <a href="#">Next</a> ]</span><span>[ Delete &amp; Previous | <a href="#">Delete &amp; Next</a> ]</span><span>[ <a href="#">Message List</a> ]</span></div>
            <div class="actions"><button>Reply</button><button>Reply All</button><i>|</i><button>Forward</button><label><input type="checkbox"><span>As Attachment</span></label><i>|</i><button>Delete</button><label class="tight"><input type="checkbox"><span>Bypass Trash</span></label>
              <div class="move"><label for="move-top">Move To:</label><span class="drop"><select id="move-top"><option>INBOX</option></select></span><button>Move</button></div></div>
          </section>
          <table class="box headers">
            <tr><th>Subject:</th><td>tests</td></tr>
            <tr><th>From:</th><td>"WRAPART" &lt;sales@warapart.co.uk&gt;</td></tr>
            <tr><th>Date:</th><td>Sat, September 9, 2017 6:43 am</td></tr>
            <tr><th>To:</th><td>"Unname" &lt;info@wrapart.co.uk&gt;</td></tr>
            <tr><th>Priority:</th><td>Normal</td></tr>
            <tr><th>Options:</th><td><div class="opts"><a href="#">View Full Header</a><i>|</i><a href="#">Print</a><i>|</i><a href="#">Download this as a file</a><i>|</i><a href="#">View as HTML</a></div></td></tr>
          </table>
          <section class="box body"><pre>cddsfdsdsvcdc</pre></section>
          <section class="box attach">
            <h3>Attachments</h3>
            <table><tr><td class="name"><a href="#">untitled-[2].html</a></td><td class="type">text/html</td><td><b>0 KiB</b></td><td class="get"><a href="#">Download</a><i>|</i><a href="#">View</a></td></tr></table>
          </section>
          <section class="box">
            <div class="actions"><button>Reply</button><button>Reply All</button><i>|</i><button>Forward</button><label><input type="checkbox"><span>As Attachment</span></label><i>|</i><button>Delete</button><label class="tight"><input type="checkbox"><span>Bypass Trash</span></label>
              <div class="move"><label for="move-end">Move To:</label><span class="drop"><select id="move-end"><option>INBOX</option></select></span><button>Move</button></div></div>
            <div class="pager"><span>[ Previous | <a href="#">Next</a> ]</span><span>[ Delete &amp; Previous | <a href="#">Delete &amp; Next</a> ]</span><span>[ <a href="#">Message List</a> ]</span></div>
          </section>
        </main>
      </div>
      <div class="downloads">
        <button class="item"><svg width="12" height="16" viewBox="0 0 12 16"><path d="M.7.7H8L11.300 4V15.300H.7ZM8 .7V4H11.300" fill="#fff" stroke="#999"/></svg><span>V2830_20170909.cfg</span><svg width="11" height="8" viewBox="0 0 11 8"><path d="M1 7 5.500 2 10 7" fill="none" stroke="#555" stroke-width="1.800"/></svg></button>
        <button class="showall">Show all</button>
        <button aria-label="Close downloads bar"><svg width="10" height="10"><use href="#x"/></svg></button>
      </div>
    </div>
    <div class="taskbar">
      <div class="sys"><button aria-label="Start"><svg width="16" height="16"><use href="#t-win"/></svg></button><button aria-label="Cortana"><svg width="16" height="16"><use href="#t-cortana"/></svg></button><button aria-label="Task view"><svg width="20" height="16"><use href="#t-view"/></svg></button></div>
      <div class="apps">
        <button class="front" aria-label="Chrome"><svg><use href="#t-chrome"/></svg></button><button aria-label="Edge"><svg><use href="#t-edge"/></svg></button><button aria-label="Firefox"><svg><use href="#t-fox"/></svg></button><button aria-label="Thunderbird"><svg><use href="#t-bird"/></svg></button><button class="open" aria-label="Explorer"><svg><use href="#t-files"/></svg></button><button aria-label="PowerShell"><svg><use href="#t-ps"/></svg></button><button class="open" aria-label="Command Prompt"><svg><use href="#t-cmd"/></svg></button><button aria-label="PuTTY"><svg><use href="#t-putty"/></svg></button><button aria-label="PuTTYgen"><svg><use href="#t-putty2"/></svg></button><button aria-label="Visual Studio"><svg><use href="#t-vs"/></svg></button><button aria-label="Notepad++"><svg><use href="#t-note"/></svg></button><button aria-label="FileZilla"><svg><use href="#t-fz"/></svg></button><button class="psd"><span>Ps</span></button><button class="open" aria-label="Settings"><svg><use href="#t-gear"/></svg></button><button class="open" aria-label="Remote Desktop"><svg><use href="#t-rdp"/></svg></button><button class="open" aria-label="Paint"><svg><use href="#t-paint"/></svg></button>
      </div>
      <div class="tray"><time>2:23 PM</time></div>
    </div>
  </section>
</div>
</body>
</html>
```
FILE: styles.css
```css
* { box-sizing: border-box; }
body { margin: 0; font: 11px/13px "Open Sans", "Noto Sans", sans-serif; color: #333; }
button { border: 0; padding: 0; margin: 0; background: none; font: inherit; color: inherit; }
svg { display: block; flex: none; }
i { font-style: normal; }
.sprite { position: absolute; width: 0; height: 0; }
.desktop { display: grid; grid-template-columns: 1fr 1fr; height: 100vh; overflow: hidden; }
.screen { display: flex; flex-direction: column; min-width: 0; min-height: 0; }
.caret { display: block; width: 0; height: 0; border: 3px solid transparent; border-top-color: currentColor; border-bottom: 0; }

/* Paint */
.paint { flex: 1; display: flex; flex-direction: column; min-height: 0; background: #fff; }
.titlebar { display: flex; justify-content: space-between; height: 23px; }
.quick { display: flex; align-items: center; gap: 8px; }
.vbar { width: 1px; height: 12px; background: #888; }
.doc { font-size: 12px; color: #999; }
.wincontrols { display: flex; }
.wincontrols button { width: 45px; height: 26px; display: grid; place-items: center; color: #000; }
.dim button { height: 20px; color: #999; }
.dim { padding-right: 3px; }
.ribbontabs { display: flex; height: 23px; font-size: 12px; }
.ribbontabs .file { width: 56px; background: #1979ca; color: #fff; }
.ribbontabs .home { width: 58px; height: 24px; background: #f5f6f7; border: 1px solid #dadbdc; border-bottom: 0; z-index: 1; }
.ribbontabs .view { width: 56px; }
.ribbonhelp { margin-left: auto; display: flex; align-items: center; gap: 11px; padding-right: 4px; }
.help { width: 14px; height: 14px; border-radius: 50%; background: #0c6fcd; color: #fff; font-weight: bold; font-size: 11px; line-height: 14px; }
.ribbon { display: flex; height: 93px; background: #f5f6f7; border-top: 1px solid #dadbdc; border-bottom: 1px solid #dadbdc; padding: 2px 0; }
.group { display: flex; flex-direction: column; border-right: 1px solid #e2e3e4; padding-top: 2px; }
.items { display: flex; height: 66px; }
.label { text-align: center; line-height: 15px; height: 15px; margin-top: 4px; color: #5a5a5a; }
.big { display: flex; flex-direction: column; align-items: center; width: 42px; line-height: 13px; }
.big .pic { height: 38px; display: grid; place-items: center; }
.big .caret { margin-top: 4px; }
.dimtext { color: #999; }
.stack { display: flex; flex-direction: column; }
.stack button { display: flex; align-items: center; gap: 3px; height: 22px; }
.stack .caret { margin-left: 4px; }
.g-clip { width: 107px; padding-left: 5px; }
.g-clip .label { padding-right: 5px; }
.g-clip .stack { margin-left: 4px; }
.g-image { width: 122px; padding-left: 4px; }
.g-image .stack { margin-left: 5px; }
.g-image .label { padding-right: 4px; }
.select { border: 1px solid #62a2e4; background: #c9e0f7; }
.select .lower { align-self: stretch; border-top: 1px solid #62a2e4; display: flex; flex-direction: column; align-items: center; flex: 1; }
.g-tools { width: 80px; }
.toolgrid { display: grid; grid-template: 26px 26px / 23px 23px 23px; justify-content: center; align-content: center; }
.toolgrid button { display: grid; place-items: center; }
.toolgrid .glyph { font: bold 18px/20px "Liberation Serif", serif; color: #1f3864; }
.g-brush { width: 57px; padding-left: 6px; }
.g-shapes { width: 246px; padding-left: 5px; }
.gallery { display: flex; width: 157px; height: 60px; margin-top: 3px; border: 1px solid #dadbdc; background: #fafbfc; }
.gallerybar { width: 15px; border-left: 1px solid #dadbdc; display: flex; flex-direction: column; justify-content: space-around; align-items: center; color: #555; }
.caret.up { border-top: 0; border-bottom: 3px solid #b5b5b5; }
.g-shapes .stack { margin-left: 6px; }
.g-shapes .label { padding-right: 10px; }
.g-size { width: 53px; padding-left: 5px; }
.g-colors { width: 357px; padding-left: 4px; }
.color.on { background: #c9e0f7; box-shadow: inset 0 0 0 1px #62a2e4; }
.well { display: block; border: 1px solid #777; box-shadow: inset 0 0 0 1px #fff; }
.well.black { width: 32px; height: 32px; background: #000; }
.well.white { width: 24px; height: 24px; background: #fff; }
.palette { display: grid; grid-template: repeat(3, 20px) / repeat(10, 20px); gap: 2px; margin: 1px 6px 0 1px; }
.palette i { border: 1px solid #a0a0a0; }
.palette i[class] { box-shadow: inset 0 0 0 1px #fff; }
.c-black { background: #000; } .c-gray { background: #7f7f7f; } .c-maroon { background: #880015; } .c-red { background: #ed1c24; } .c-orange { background: #ff7f27; }
.c-yellow { background: #fff200; } .c-green { background: #22b14c; } .c-azure { background: #00a2e8; } .c-indigo { background: #3f48cc; } .c-purple { background: #a349a4; }
.c-white { background: #fff; } .c-silver { background: #c3c3c3; } .c-brown { background: #b97a57; } .c-rose { background: #ffaec9; } .c-gold { background: #ffc90e; }
.c-cream { background: #efe4b0; } .c-lime { background: #b5e61d; } .c-sky { background: #99d9ea; } .c-steel { background: #7092be; } .c-lavender { background: #c8bfe7; }
.g-colors .big:last-child { width: 40px; margin-left: -5px; }
.g-3d { width: 59px; padding-left: 2px; }
.g-3d .big { width: 54px; }

.workspace { flex: 1; min-height: 0; padding: 5px; background: linear-gradient(#c5cee0, #dde7f3); }
.picture { position: relative; width: 980px; height: 673px; background: #fff; padding-left: 5px; }
.picture::before { content: ""; position: absolute; left: 100%; top: 9px; bottom: -7px; width: 7px; background: linear-gradient(90deg, #a8b5cc, #c3cee0); }
.picture::after { content: ""; position: absolute; top: 100%; left: 9px; right: 0; height: 8px; background: linear-gradient(#a8b5cc, #cdd8e8); }
.clip { height: 100%; overflow: hidden; display: flex; }
.clip .browser { width: 50vw; flex: none; }
.handle { position: absolute; width: 5px; height: 5px; border: 1px solid #555; background: #fff; z-index: 1; }
.handle.right { left: 100%; top: calc(50% - 3px); }
.handle.bottom { top: 100%; left: calc(50% - 3px); }
.handle.corner { top: 100%; left: 100%; }
.status { display: flex; height: 26px; background: #f0f0f0; border-top: 1px solid #d5d5d5; font-size: 11px; color: #222; }
.cell { width: 156px; display: flex; align-items: center; gap: 6px; padding-left: 5px; border-right: 1px solid #d7d7d7; }
.zoom { margin-left: auto; display: flex; align-items: center; gap: 8px; padding: 0 4px 0 21px; border-left: 1px solid #d7d7d7; }
.round { width: 16px; height: 16px; border: 1px solid #777; border-radius: 50%; background: linear-gradient(#fff, #ddd); line-height: 12px; font-size: 14px; text-align: center; }
.zoom input { appearance: none; width: 86px; height: 20px; margin: 0; background: none; }
.zoom input::-webkit-slider-runnable-track { height: 4px; background: #e3e8e8; border: 1px solid #d0d4d4; }
.zoom input::-webkit-slider-thumb { appearance: none; width: 10px; height: 17px; margin-top: -8px; background: #0078d7; clip-path: polygon(0 0, 100% 0, 100% 75%, 50% 100%, 0 75%); }

/* Browser window */
.browser { display: flex; flex-direction: column; min-width: 0; background: #fff; }
.full { flex: 1; min-height: 0; }
.tabstrip { display: flex; height: 29px; padding-left: 6px; background: linear-gradient(#a9a9a9, #a9a9a9) left bottom / 100% 1px no-repeat #fff; }
.tab { position: relative; flex: none; width: 206px; height: 28px; margin-right: -13px; padding: 2px 18px 0 19px; display: flex; align-items: center; gap: 9px; color: #555; }
.tab > svg, .tab > span, .tab > button { position: relative; }
.tab > .tabshape { position: absolute; inset: 0; width: 100%; height: 28px; fill: #d9d9d9; }
.tab > svg[width="17"] { margin-right: -4px; }
.tab span { flex: 1; font-size: 12px; line-height: 16px; white-space: nowrap; overflow: hidden; }
.tab .fade { margin-right: -4px; mask-image: linear-gradient(90deg, #000 88%, transparent); }
.tab.active { z-index: 1; height: 29px; color: #222; }
.tab.active .tabshape { fill: #f2f2f2; height: 29px; }
.pale { opacity: .7; }
.newtab { align-self: flex-start; margin: 7px 0 0 11px; }
.profile { margin: 8px 13px 0 auto; font-size: 11px; color: #fff; text-shadow: 1px 0 #555, -1px 0 #555, 0 1px #555, 0 -1px #555; }
.full .wincontrols { padding-right: 3px; }
.toolbar { display: flex; align-items: center; gap: 14px; height: 32px; padding: 4px 16px 0 11px; background: #f2f2f2; color: #555; }
.forward { color: #d0d0d0; }
.omnibox { flex: 1; display: flex; align-items: center; height: 28px; margin-left: -2px; padding: 0 6px 0 9px; border: 1px solid #a9a9a9; border-radius: 3px; background: #fff; font-size: 13px; line-height: 18px; }
.secure { margin-left: 9px; padding-right: 9px; border-right: 1px solid #999; color: #0b8043; }
.url { flex: 1; margin-left: 8px; color: #808080; white-space: nowrap; }
.url b { font-weight: normal; color: #0b8043; }
.url em { font-style: normal; color: #222; }
.menudots { margin-left: 2px; }
.bookmarks { display: flex; align-items: center; gap: 13px; height: 29px; padding: 0 11px; background: #f2f2f2; border-bottom: 1px solid #b9b9b9; }
.bookmarks a { display: flex; align-items: center; gap: 10px; font-size: 12px; color: #222; text-decoration: none; }
.mailhead { position: relative; display: flex; align-items: center; flex: none; height: 50px; padding-left: 15px; background: #293a4a; color: #fff; box-shadow: 0 1px 4px rgba(0, 0, 0, .4); z-index: 1; }
.logo { font: italic 900 27px/30px Inter, sans-serif; }
.account { margin-left: auto; display: flex; height: 100%; font-size: 12px; fill: #fff; }
.account > * { display: flex; align-items: center; gap: 4px; padding: 0 12px; border-left: 1px solid #33475a; color: #fff; text-decoration: none; }
.account > .who { padding: 0 11px 0 9px; gap: 3px; }
.account > .out { padding: 0 8px 0 9px; gap: 3px; }
.who .caret { margin-left: 10px; border-width: 4px 4px 0; }

/* Mail client */
.frames { flex: 1; display: flex; min-height: 0; font: 16px/20px "Liberation Sans", Arial, sans-serif; color: #000; }
.side { width: 156px; flex: none; padding-top: 10px; background: linear-gradient(90deg, #b3aeae 0 1px, #d2d0d0 1px 5px, #000 5px) right / 6px 100% no-repeat #a0b8c8; }
.sidehead { width: 100px; text-align: center; font-size: 13px; line-height: 15px; }
.side h2 { margin: 0; font-size: 18px; line-height: 21px; }
.side p { margin: 0; }
.side a { color: #000; }
.side ul { list-style: none; margin: 18px 0 0; padding: 0 0 0 18px; line-height: 18px; color: #800000; }
.side li > a { color: #800000; text-decoration: none; }
.side li > a.junk { color: #000; }
.side small { font-size: 13px; }
.side .purge { color: #800000; }
.trash small { margin-left: 12px; }
.mail { flex: 1; min-width: 0; padding: 8px; }
.mail a { color: #0000cc; }
.current { height: 20px; margin-right: 7px; padding-left: 2px; background: #ababab; line-height: 19px; }
.menu { display: flex; gap: 13px; padding-left: 2px; margin-bottom: 18px; }
.box { border: 1px solid #ababab; margin-bottom: 5px; }
.pager { display: flex; align-items: center; gap: 25px; height: 23px; padding-left: 2px; font-size: 13px; }
.actions { display: flex; align-items: center; height: 25px; padding: 0 2px; background: #dcdcdc; font-size: 13px; }
.actions button { height: 19px; border: 1px solid #a5a5a5; border-radius: 2px; padding: 0 1px; background: linear-gradient(#f6f6f6, #dedede); font-size: 13px; line-height: 17px; margin-right: 8px; }
.actions i { margin: 0 12px 0 4px; }
.actions > label { display: flex; align-items: center; gap: 8px; margin-right: 9px; }
.actions > .tight { gap: 4px; }
.actions input { appearance: none; width: 12px; height: 13px; margin: 0 0 3px; border: 1px solid #acacac; border-radius: 3px; background: linear-gradient(#eee, #ddd); }
.move { margin-left: auto; display: flex; align-items: center; gap: 4px; }
.actions .move button { margin: 0; }
.drop { position: relative; display: flex; }
.drop::after { content: "▼"; position: absolute; right: 6px; top: 4px; font: 8px/10px "DejaVu Sans", sans-serif; pointer-events: none; }
.drop select { appearance: none; width: 65px; height: 19px; padding: 0 4px; border: 1px solid #a9a9a9; border-radius: 2px; background: #fff; font: 13px/17px "Liberation Sans", Arial, sans-serif; color: #000; }
.headers { width: 100%; border-collapse: separate; border-spacing: 0; background: #dcdcdc; }
.headers th, .headers td { height: 20px; padding: 0 4px; line-height: 20px; }
.headers th { width: 25%; text-align: right; }
.opts { display: flex; gap: 9px; font-size: 13px; }
.body { height: 63px; padding: 21px 11px; }
.body pre { margin: 0; font: 12px/20px "DejaVu Sans Mono", monospace; }
.attach { background: #ededed; border-top: 0; }
.attach h3 { margin: 0; padding-left: 2px; font-size: 16px; line-height: 21px; background: #ababab; }
.attach table { width: 100%; table-layout: fixed; border-spacing: 0; font-size: 13px; }
.attach td { padding: 0 2px; height: 20px; line-height: 20px; }
.attach .name { width: 35.2%; font-size: 16px; }
.attach .type { width: 17%; }
.attach .get { text-align: right; }
.get i { margin: 0 8px; }
.downloads { display: flex; align-items: center; gap: 12px; height: 49px; padding: 0 12px 0 22px; background: #f1f1f1; border-top: 1px solid #cfcfcf; color: #222; }
.item { display: flex; align-items: center; gap: 15px; height: 36px; padding-right: 19px; margin-right: auto; border-right: 1px solid #c4c4c4; font-size: 12px; }
.item svg:last-child { margin-left: 22px; }
.showall { width: 78px; height: 28px; border: 1px solid #b0b0b0; border-radius: 3px; background: #fdfdfd; font-size: 12px; }

/* Taskbar */
.taskbar { display: flex; height: 30px; background: #050505; color: #fff; }
.taskbar button { width: 36px; height: 30px; display: grid; place-items: center; }
.sys, .apps, .tray { display: flex; }
.apps { gap: 1px; margin-left: 3px; }
.apps svg { width: 16px; height: 16px; }
.taskbar .open { background: linear-gradient(#9bcdf7, #9bcdf7) center bottom / 28px 2px no-repeat; }
.taskbar .front { background: linear-gradient(#9bcdf7, #9bcdf7) center bottom / 36px 2px no-repeat #3c3c3c; }
.psd span { width: 17px; height: 16px; border: 1px solid #18c0f0; background: #062636; color: #18c0f0; font-size: 10px; line-height: 13px; }
.tray { margin-left: auto; align-items: center; gap: 9px; font-size: 12px; padding-right: 10px; }
.tray time { margin: 0 12px 0 5px; }
.tray .notice { margin-right: 14px; }
.tray time:only-child { margin: 0; }
```
